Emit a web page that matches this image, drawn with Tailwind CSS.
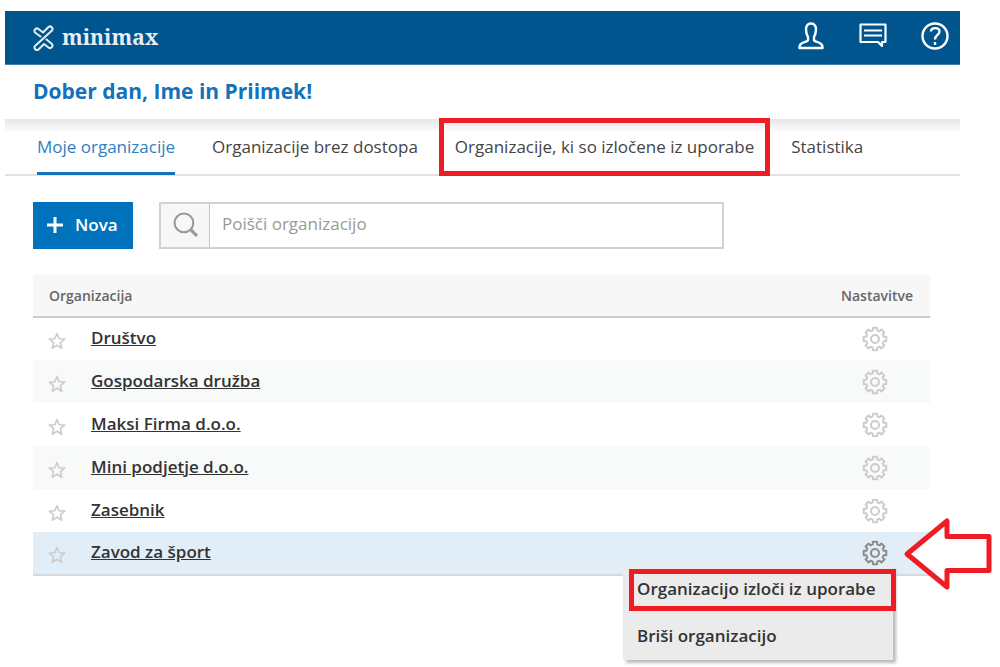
<!DOCTYPE html>
<html lang="sl">
<head>
  <meta charset="UTF-8" />
  <meta name="viewport" content="width=device-width, initial-scale=1.0"/>
  <title>minimax</title>
  <script src="https://cdn.jsdelivr.net/npm/@tailwindcss/browser@4"></script>
</head>
<body class="min-h-screen pt-[11px] pl-[5px] pr-10 bg-white text-[#444] font-['Open_Sans','Noto_Sans',sans-serif]">

  <!-- shared icons -->
  <svg class="hidden">
    <symbol id="star" viewBox="0 0 18 18">
      <path d="M9 1.5l2.1 5.2 5.6.4-4.3 3.6 1.4 5.5L9 13.2l-4.800 3 1.400-5.500L1.300 7.100l5.600-.4z" fill="none" stroke="currentColor" stroke-width="1.600" stroke-linejoin="round"/>
    </symbol>
    <symbol id="gear" viewBox="-13 -13 26 26">
      <path d="M8.7-2.2L11.3-2.2 11.3 2.2 8.7 2.2 7.7 4.6 9.5 6.4 6.4 9.5 4.6 7.7 2.2 8.7 2.2 11.3-2.2 11.3-2.2 8.7-4.6 7.7-6.4 9.5-9.5 6.4-7.7 4.6-8.7 2.2-11.3 2.2-11.3-2.2-8.7-2.2-7.7-4.6-9.5-6.4-6.4-9.5-4.6-7.7-2.2-8.7-2.2-11.3 2.2-11.3 2.2-8.7 4.6-7.7 6.4-9.5 9.5-6.4 7.7-4.6z" fill="none" stroke="currentColor" stroke-width="2" stroke-linejoin="round"/>
      <circle r="4" fill="none" stroke="currentColor" stroke-width="2"/>
    </symbol>
  </svg>

  <header class="flex items-center justify-between h-[54px] pl-7 pr-[11px] bg-[#00558f] border-b border-[#3f7fac] text-white">
    <a href="#" class="flex items-center gap-2 text-[#e4eef5]">
      <svg class="w-[21px] h-[26px]" viewBox="0 0 21 26" fill="none" stroke="currentColor" stroke-width="2" stroke-linecap="round" stroke-linejoin="round">
        <path d="M7.500 11.500L2 7.500a2.500 2.500 0 0 1 3.500-3.500L10 7.500 15.500 2a2.500 2.500 0 0 1 3.500 3.500L7.500 16 2 21a2.500 2.500 0 0 0 3.500 3.500L11 19l4.500 3.500a2.500 2.500 0 0 0 3.500-3.500L13.500 14.500"/>
      </svg>
      <span class="font-['Noto_Serif','DejaVu_Serif',serif] font-bold text-[21px]">minimax</span>
    </a>
    <nav class="flex items-center gap-[34px] pb-[3px]">
      <button aria-label="Profil">
        <svg class="w-7 h-7" viewBox="0 0 28 28" fill="none" stroke="currentColor" stroke-width="2.400" stroke-linejoin="round">
          <path d="M14 1.500c-3.500 0-5 2.500-5 6 0 3 .5 5 2 7.500v3c0 2.500-8.500 1.500-8.500 7v1h23v-1c0-5.500-8.500-4.500-8.500-7v-3c1.500-2.500 2-4.500 2-7.500 0-3.500-1.500-6-5-6z"/>
        </svg>
      </button>
      <button aria-label="Sporočila">
        <svg class="w-7 h-7" viewBox="0 0 28 28" fill="none" stroke="currentColor" stroke-width="2.200" stroke-linejoin="round">
          <path d="M1.500 2.500h25v17.500h-3.500v4l-4-4H1.500z"/>
          <path d="M5 8.500h18M5 13.500h18"/>
        </svg>
      </button>
      <button aria-label="Pomoč">
        <svg class="w-7 h-7" viewBox="0 0 28 28" fill="none" stroke="currentColor" stroke-width="2.400">
          <circle cx="14" cy="14" r="12.500"/>
          <path d="M10 9.500c0-4.500 8.500-4.500 8.500 0 0 3.500-4.500 3.500-4.500 8M14 20v3"/>
        </svg>
      </button>
    </nav>
  </header>

  <div class="flex items-center h-[54px] px-7">
    <h1 class="text-[21px] font-bold text-[#1372bb]">Dober dan, Ime in Priimek!</h1>
  </div>

  <nav class="flex items-stretch h-[57px] pl-8 border-b-2 border-[#e2e2e2] bg-linear-to-b from-[#e6e6e6] to-white to-25% text-[17px] whitespace-nowrap">
    <a href="#" class="flex items-center -mb-px pt-[2px] border-b-3 border-[#1372bb] text-[#2b7fc3]">Moje organizacije</a>
    <a href="#" class="flex items-center ml-[37px]">Organizacije brez dostopa</a>
    <a href="#" class="flex items-center -mt-px -mb-[2px] ml-[21px] px-[11px] border-5 border-[#ee1c24]">Organizacije, ki so izločene iz uporabe</a>
    <a href="#" class="flex items-center ml-[21px]">Statistika</a>
  </nav>

  <main class="pl-7 pr-[30px] pt-[26px]">
    <div class="flex gap-[26px] text-[17px]">
      <button class="flex items-center gap-3 h-[47px] w-[100px] pl-[14px] pb-[2px] bg-[#0072bc] text-white font-semibold">
        <svg class="w-4 h-4" viewBox="0 0 16 16" stroke="currentColor" stroke-width="3"><path d="M8 0v16M0 8h16"/></svg>
        Nova
      </button>
      <label class="flex h-[47px] w-[565px] border-2 border-[#d2d2d2]">
        <span class="flex items-center justify-center w-[49px] pb-[3px] border-r border-[#c4c4c4] bg-[#f7f7f7] text-[#999]">
          <svg class="w-[25px] h-[25px]" viewBox="0 0 24 24" fill="none" stroke="currentColor" stroke-width="2"><circle cx="10.500" cy="10.500" r="9"/><path d="M17 17l6 6" stroke-width="3"/></svg>
        </span>
        <input type="text" aria-label="Poišči organizacijo" placeholder="Poišči organizacijo" class="flex-1 px-3 pb-[3px] outline-none placeholder:text-[#999]"/>
      </label>
    </div>

    <table class="w-full mt-[26px] border-b-2 border-[#d5d9dc]">
      <thead>
        <tr class="h-[42px] bg-[#f7f7f7] border-b-2 border-[#ccc] text-sm text-[#666]">
          <th colspan="2" class="pl-4 text-left font-semibold">Organizacija</th>
          <th class="w-[110px] pl-1 font-semibold">Nastavitve</th>
        </tr>
      </thead>
      <tbody class="text-[17px] font-semibold text-[#333]">
        <tr class="h-[43px]">
          <td class="w-[58px] pl-[15px]"><button aria-label="Priljubljena" class="block pt-1 text-[#ccc]"><svg class="w-[18px] h-[18px]"><use href="#star"/></svg></button></td>
          <td class="pb-[2px]"><a href="#" class="underline">Društvo</a></td>
          <td><button aria-label="Nastavitve" class="block mx-auto text-[#ccc]"><svg class="w-[26px] h-[26px]"><use href="#gear"/></svg></button></td>
        </tr>
        <tr class="h-[43px] bg-[#f8f9f9]">
          <td class="pl-[15px]"><button aria-label="Priljubljena" class="block pt-1 text-[#ccc]"><svg class="w-[18px] h-[18px]"><use href="#star"/></svg></button></td>
          <td class="pb-[2px]"><a href="#" class="underline">Gospodarska družba</a></td>
          <td><button aria-label="Nastavitve" class="block mx-auto text-[#ccc]"><svg class="w-[26px] h-[26px]"><use href="#gear"/></svg></button></td>
        </tr>
        <tr class="h-[43px]">
          <td class="pl-[15px]"><button aria-label="Priljubljena" class="block pt-1 text-[#ccc]"><svg class="w-[18px] h-[18px]"><use href="#star"/></svg></button></td>
          <td class="pb-[2px]"><a href="#" class="underline">Maksi Firma d.o.o.</a></td>
          <td><button aria-label="Nastavitve" class="block mx-auto text-[#ccc]"><svg class="w-[26px] h-[26px]"><use href="#gear"/></svg></button></td>
        </tr>
        <tr class="h-[43px] bg-[#f8f9f9]">
          <td class="pl-[15px]"><button aria-label="Priljubljena" class="block pt-1 text-[#ccc]"><svg class="w-[18px] h-[18px]"><use href="#star"/></svg></button></td>
          <td class="pb-[2px]"><a href="#" class="underline">Mini podjetje d.o.o.</a></td>
          <td><button aria-label="Nastavitve" class="block mx-auto text-[#ccc]"><svg class="w-[26px] h-[26px]"><use href="#gear"/></svg></button></td>
        </tr>
        <tr class="h-[43px]">
          <td class="pl-[15px]"><button aria-label="Priljubljena" class="block pt-1 text-[#ccc]"><svg class="w-[18px] h-[18px]"><use href="#star"/></svg></button></td>
          <td class="pb-[2px]"><a href="#" class="underline">Zasebnik</a></td>
          <td><button aria-label="Nastavitve" class="block mx-auto text-[#ccc]"><svg class="w-[26px] h-[26px]"><use href="#gear"/></svg></button></td>
        </tr>
        <tr class="h-[43px] bg-[#e2eef7]">
          <td class="pl-[15px]"><button aria-label="Priljubljena" class="block pt-1 text-[#ccc]"><svg class="w-[18px] h-[18px]"><use href="#star"/></svg></button></td>
          <td class="pb-[2px]"><a href="#" class="underline">Zavod za šport</a></td>
          <td class="relative">
            <button aria-label="Nastavitve" class="block mx-auto text-[#8c8c8c]"><svg class="w-[26px] h-[26px]"><use href="#gear"/></svg></button>
            <!-- row menu -->
            <div class="absolute top-[34px] right-[37px] w-[270px] h-[94px] pt-[3px] pl-[6px] bg-[#ebebeb] shadow-[3px_3px_3px_#bbb] whitespace-nowrap">
              <button class="block w-[267px] h-[42px] pl-[3px] pb-[2px] border-5 border-[#ee1c24] text-left">Organizacijo izloči iz uporabe</button>
              <button class="block h-[50px] pl-2 text-left">Briši organizacijo</button>
            </div>
            <!-- pointer arrow -->
            <svg class="absolute -top-[16px] left-[82px] w-[90px] h-[76px]" viewBox="0 0 90 76" fill="white" stroke="#ee1c24" stroke-width="5" stroke-linejoin="round">
              <path d="M5 38L45 5v15.500h42v34H45V71z"/>
            </svg>
          </td>
        </tr>
      </tbody>
    </table>
  </main>

</body>
</html>
